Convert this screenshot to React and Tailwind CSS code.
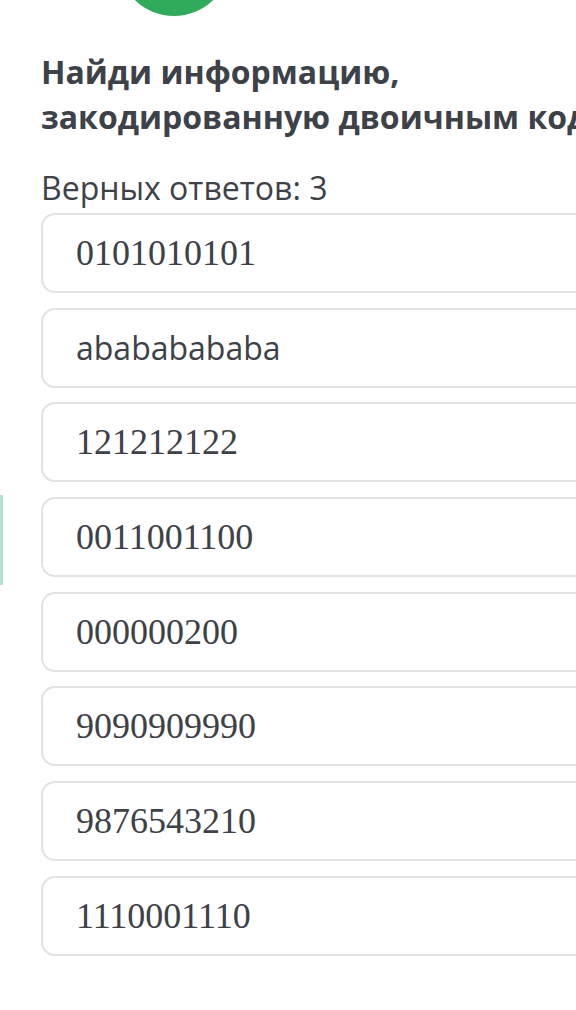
import React from "react";

const options = [
  { text: "0101010101", serif: true },
  { text: "abababababa", serif: false },
  { text: "121212122", serif: true },
  { text: "0011001100", serif: true },
  { text: "000000200", serif: true },
  { text: "9090909990", serif: true },
  { text: "9876543210", serif: true },
  { text: "1110001110", serif: true },
];

function App() {
  return (
    <div className="w-[576px] h-[1010px] overflow-hidden bg-white flex font-['Open_Sans',sans-serif] text-[#3d4148]">
      {/* sliver of the neighbouring card */}
      <div className="shrink-0 w-[3px] h-[90px] mt-[495px] bg-[#b5e2d0]" />

      <div className="flex flex-col pl-[38px] shrink-0">
        {/* green badge, cut off at the top */}
        <div className="w-[112px] h-[112px] rounded-full bg-[#2eac5a] mt-[-96px] ml-[77px] shrink-0" />

        <h1 className="mt-[33px] text-[32px] leading-[45px] font-bold whitespace-nowrap">
          Найди информацию,
          <br />
          закодированную двоичным кодом
        </h1>

        <p className="mt-[29px] text-[32px] leading-[40px]">Верных ответов: 3</p>

        {/* answers */}
        <div className="mt-[5px] flex flex-col gap-[14.7px]">
          {options.map((o) => (
            <div
              key={o.text}
              className="w-[600px] h-[80px] shrink-0 border-2 border-[#e2e2e2] rounded-[14px] flex items-center pl-[33px]"
            >
              {o.serif ? (
                <span className="font-['Liberation_Serif',serif] text-[36px] leading-none">
                  {o.text}
                </span>
              ) : (
                <span className="text-[32px] leading-none">{o.text}</span>
              )}
            </div>
          ))}
        </div>
      </div>
    </div>
  );
}

export default App;
